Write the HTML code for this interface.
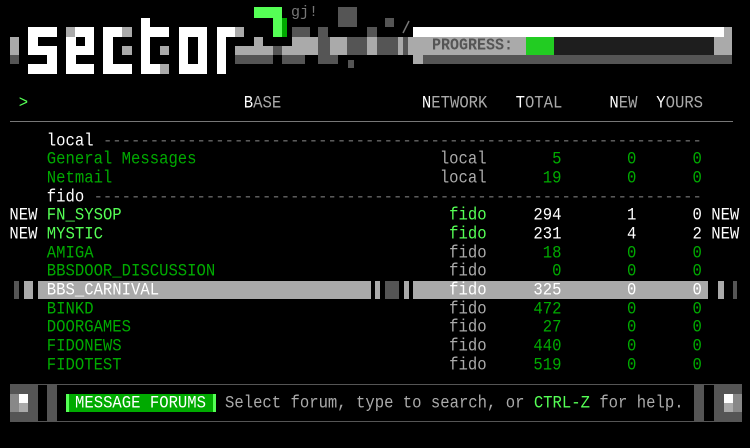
<!DOCTYPE html>
<html><head><meta charset="utf-8"><style>
html,body{margin:0;padding:0;background:#000;width:750px;height:448px;overflow:hidden;position:relative}
.b{position:absolute}
.t{position:absolute;font-family:"Liberation Mono",monospace;font-size:15.6px;line-height:18.67px;height:18.67px;white-space:pre;transform:scaleY(1.15);transform-origin:0 50%;margin-top:1px}
.w{color:#fff}.g{color:#00aa00}.G{color:#55ff55}.y{color:#aaaaaa}.d{color:#666}
</style></head><body>
<svg class="b" style="left:0;top:0" width="420" height="80">
<g fill="#aaa"><rect x="10" y="37" width="9" height="18"/></g>
<rect x="10" y="55" width="9" height="9" fill="#555"/>
<g fill="#fff">
<rect x="28" y="27" width="29" height="10"/><rect x="28" y="27" width="10" height="28"/><rect x="28" y="46" width="29" height="9"/><rect x="47" y="46" width="10" height="28"/><rect x="28" y="64" width="29" height="10"/>
<rect x="75" y="27" width="19" height="10"/><rect x="66" y="37" width="10" height="37"/><rect x="85" y="37" width="9" height="9"/><rect x="66" y="46" width="28" height="9"/><rect x="66" y="64" width="28" height="10"/>
<rect x="103" y="27" width="19" height="10"/><rect x="103" y="27" width="10" height="47"/><rect x="103" y="64" width="29" height="10"/>
<rect x="141" y="18" width="9" height="56"/><rect x="141" y="27" width="28" height="10"/><rect x="141" y="64" width="19" height="10"/>
<rect x="179" y="27" width="28" height="10"/><rect x="179" y="27" width="9" height="47"/><rect x="198" y="27" width="9" height="47"/><rect x="179" y="64" width="28" height="10"/>
<rect x="217" y="27" width="19" height="10"/><rect x="217" y="27" width="9" height="47"/>
<rect x="230" y="27" width="5" height="10"/>
</g>
<g fill="#aaa">
<rect x="66" y="27" width="9" height="10"/><rect x="122" y="27" width="10" height="10"/><rect x="122" y="46" width="10" height="9"/>
<rect x="160" y="46" width="9" height="9"/><rect x="160" y="64" width="9" height="10"/>
<rect x="235" y="27" width="9" height="10"/><rect x="236" y="46" width="14" height="9"/>
<rect x="254" y="37" width="9" height="9"/><rect x="292" y="37" width="26" height="9"/><rect x="330" y="37" width="17" height="9"/><rect x="367" y="37" width="10" height="9"/>
<rect x="235" y="46" width="38" height="9"/><rect x="282" y="46" width="36" height="9"/><rect x="330" y="46" width="17" height="9"/><rect x="367" y="46" width="10" height="9"/><rect x="398" y="37" width="5" height="18"/><rect x="408" y="37" width="5" height="18"/>
</g>
<g fill="#555">
<rect x="318" y="37" width="12" height="18"/><rect x="347" y="37" width="20" height="18"/><rect x="377" y="37" width="21" height="18"/><rect x="403" y="37" width="5" height="18"/>
<rect x="273" y="46" width="9" height="9"/>
<rect x="235" y="55" width="38" height="9"/><rect x="282" y="55" width="23" height="9"/><rect x="318" y="55" width="20" height="9"/>
<rect x="292" y="27" width="18" height="10"/><rect x="318" y="27" width="10" height="10"/><rect x="367" y="27" width="10" height="10"/>
<rect x="338" y="7" width="19" height="20"/><rect x="385" y="18" width="9" height="9"/><rect x="348" y="60" width="6" height="8"/>
</g>
<rect x="254" y="7" width="28" height="11" fill="#55ff55"/><rect x="273" y="7" width="9" height="30" fill="#55ff55"/><rect x="282" y="18" width="5" height="19" fill="#00aa00"/>
<text x="291" y="16" font-family="Liberation Mono,monospace" font-size="15" fill="#777">gj!</text>
<line x1="403" y1="33" x2="409" y2="21" stroke="#777" stroke-width="1.5"/>
</svg>
<div class="b" style="left:413px;top:27px;width:311px;height:10px;background:#fff"></div>
<div class="b" style="left:724px;top:27px;width:8px;height:37px;background:#aaa"></div>
<div class="b" style="left:413px;top:37px;width:311px;height:18px;background:#aaa"></div>
<div class="b" style="left:413px;top:55px;width:10px;height:9px;background:#aaa"></div>
<div class="b" style="left:423px;top:55px;width:309px;height:9px;background:#555"></div>
<div class="b" style="left:526px;top:37px;width:28px;height:18px;background:#22cc22"></div>
<div class="b" style="left:554px;top:37px;width:160px;height:18px;background:#1e1e1e"></div>
<div class="b" style="left:432px;top:37px;font:bold 15px 'Liberation Mono',monospace;line-height:18px;color:#555;transform:scaleY(1.1)">PROGRESS:</div>
<div class="t G" style="left:18.75px;top:93.3px">&gt;</div>
<div class="t y" style="left:243.75px;top:93.3px"><span class="w">B</span>ASE</div>
<div class="t y" style="left:421.9px;top:93.3px"><span class="w">N</span>ETWORK</div>
<div class="t y" style="left:515.6px;top:93.3px"><span class="w">T</span>OTAL</div>
<div class="t y" style="left:609.4px;top:93.3px"><span class="w">N</span>EW</div>
<div class="t y" style="left:656.25px;top:93.3px"><span class="w">Y</span>OURS</div>
<div class="b" style="left:10px;top:121px;width:723px;height:1px;background:#777"></div>
<div class="b" style="left:14px;top:281px;width:5px;height:18px;background:#555"></div>
<div class="b" style="left:24px;top:281px;width:9px;height:18px;background:#aaa"></div>
<div class="b" style="left:38px;top:281px;width:333px;height:18px;background:#aaa"></div>
<div class="b" style="left:375px;top:281px;width:5px;height:18px;background:#aaa"></div>
<div class="b" style="left:385px;top:281px;width:14px;height:18px;background:#555"></div>
<div class="b" style="left:404px;top:281px;width:5px;height:18px;background:#aaa"></div>
<div class="b" style="left:413px;top:281px;width:295px;height:18px;background:#aaa"></div>
<div class="b" style="left:718px;top:281px;width:6px;height:18px;background:#aaa"></div>
<div class="b" style="left:733px;top:281px;width:4px;height:18px;background:#555"></div>
<div class="t" style="left:0;top:130.7px"><span class="w">     local </span><span class="d">----------------------------------------------------------------</span></div>
<div class="t" style="left:0;top:149.3px"><span class="g">     General Messages</span><span class="y">                          local</span><span class="g">       5       0      0</span></div>
<div class="t" style="left:0;top:168px"><span class="g">     Netmail</span><span class="y">                                   local</span><span class="g">      19       0      0</span></div>
<div class="t" style="left:0;top:186.7px"><span class="w">     fido </span><span class="d">-----------------------------------------------------------------</span></div>
<div class="t" style="left:0;top:205.3px"><span class="w"> NEW</span><span class="G"> FN_SYSOP                                   fido</span><span class="w">     294       1      0 NEW</span></div>
<div class="t" style="left:0;top:224px"><span class="w"> NEW</span><span class="G"> MYSTIC                                     fido</span><span class="w">     231       4      2 NEW</span></div>
<div class="t" style="left:0;top:242.7px"><span class="g">     AMIGA</span><span class="y">                                      fido</span><span class="g">      18       0      0</span></div>
<div class="t" style="left:0;top:261.3px"><span class="g">     BBSDOOR_DISCUSSION</span><span class="y">                         fido</span><span class="g">       0       0      0</span></div>
<div class="t w" style="left:0;top:280px">     BBS_CARNIVAL                               fido     325       0      0</div>
<div class="t" style="left:0;top:298.7px"><span class="g">     BINKD</span><span class="y">                                      fido</span><span class="g">     472       0      0</span></div>
<div class="t" style="left:0;top:317.3px"><span class="g">     DOORGAMES</span><span class="y">                                  fido</span><span class="g">      27       0      0</span></div>
<div class="t" style="left:0;top:336px"><span class="g">     FIDONEWS</span><span class="y">                                   fido</span><span class="g">     440       0      0</span></div>
<div class="t" style="left:0;top:354.7px"><span class="g">     FIDOTEST</span><span class="y">                                   fido</span><span class="g">     519       0      0</span></div>
<div class="b" style="left:10px;top:384px;width:28px;height:38px;background:#555"></div>
<div class="b" style="left:10px;top:394px;width:9px;height:18px;background:#888"></div>
<div class="b" style="left:19px;top:394px;width:9px;height:9px;background:#fff"></div>
<div class="b" style="left:19px;top:403px;width:9px;height:9px;background:#aaa"></div>
<div class="b" style="left:38px;top:384px;width:9px;height:38px;border-top:1px solid #555;border-bottom:1px solid #555;box-sizing:border-box"></div>
<div class="b" style="left:47px;top:384px;width:9px;height:38px;background:#555"></div>
<div class="b" style="left:56px;top:384px;width:639px;height:38px;border:1px solid #555;box-sizing:border-box"></div>
<div class="b" style="left:695px;top:384px;width:9px;height:38px;background:#555"></div>
<div class="b" style="left:704px;top:384px;width:10px;height:38px;border-top:1px solid #555;border-bottom:1px solid #555;box-sizing:border-box"></div>
<div class="b" style="left:714px;top:384px;width:28px;height:38px;background:#555"></div>
<div class="b" style="left:733px;top:394px;width:9px;height:18px;background:#888"></div>
<div class="b" style="left:724px;top:394px;width:9px;height:9px;background:#fff"></div>
<div class="b" style="left:724px;top:403px;width:9px;height:9px;background:#aaa"></div>
<div class="b" style="left:66px;top:394px;width:150px;height:18px;background:#00aa00;border-left:3px solid #55ff55;border-right:3px solid #55ff55;box-sizing:border-box"></div>
<div class="t" style="left:75px;top:392.7px;color:#fff">MESSAGE FORUMS</div>
<div class="t y" style="left:225px;top:392.7px">Select forum, type to search, or <span class="G">CTRL-Z</span> for help.</div>
</body></html>
